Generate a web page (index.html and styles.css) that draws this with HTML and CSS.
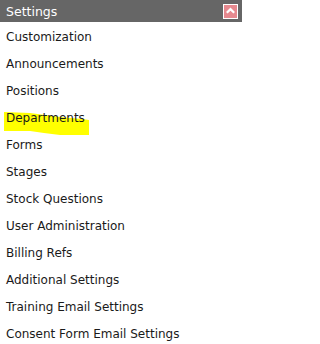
FILE: index.html
```html
<!DOCTYPE html>
<html>
<head>
<meta charset="utf-8">
<link rel="stylesheet" href="styles.css">
</head>
<body>
<div class="panel">
  <div class="header">
    <span class="title">Settings</span>
    <span class="toggle">
      <svg width="13" height="13" viewBox="0 0 13 13"><path d="M2.8 7.8 L6.5 4.1 L10.2 7.8" fill="none" stroke="#fff" stroke-width="2.2"/></svg>
    </span>
  </div>
  <ul class="menu">
    <li>Customization</li>
    <li>Announcements</li>
    <li>Positions</li>
    <li class="marked">
      <svg class="marker" width="92" height="32" viewBox="0 0 92 32"><polygon points="4,7 30,8 60,12 82,14 89,15 89,30 60,30 44,28 30,26 4,26" fill="#ffff00"/></svg>
      <span class="label">Departments</span>
    </li>
    <li>Forms</li>
    <li>Stages</li>
    <li>Stock Questions</li>
    <li>User Administration</li>
    <li>Billing Refs</li>
    <li>Additional Settings</li>
    <li>Training Email Settings</li>
    <li>Consent Form Email Settings</li>
  </ul>
</div>
</body>
</html>
```
FILE: styles.css
```css
html, body {
  margin: 0;
  padding: 0;
  background: #fff;
}
.panel {
  width: 242px;
  font-family: "DejaVu Sans", Verdana, sans-serif;
}
.header {
  height: 22px;
  background: #666666;
  display: flex;
  align-items: center;
  justify-content: space-between;
  padding: 0 4px 0 6px;
}
.title {
  color: #fff;
  font-size: 12.5px;
}
.toggle {
  width: 13px;
  height: 13px;
  border: 1px solid #fff;
  background: #e6898f;
  display: flex;
}
.menu {
  list-style: none;
  margin: 0;
  padding: 2px 0 0 0;
}
.menu li {
  height: 27px;
  line-height: 27px;
  padding-left: 6px;
  font-size: 12px;
  color: #1a1a1a;
}
.marked {
  position: relative;
}
.marker {
  position: absolute;
  left: 0;
  top: 0;
}
.label {
  position: relative;
}
```
